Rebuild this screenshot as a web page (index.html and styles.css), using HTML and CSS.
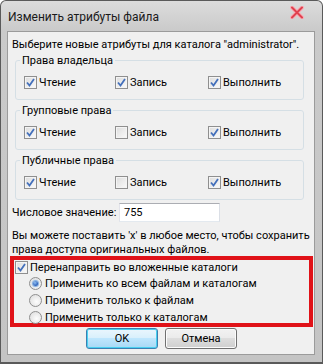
FILE: index.html
```html
<!DOCTYPE html>
<html lang="ru">
<head>
<meta charset="utf-8">
<title>Изменить атрибуты файла</title>
<link rel="stylesheet" href="styles.css">
</head>
<body>
<div class="window">
  <div class="titlebar">
    <span class="title">Изменить атрибуты файла</span>
    <svg class="close" width="14" height="13" viewBox="0 0 14 13">
      <path d="M2 1.5 L12 11.5 M12 1.5 L2 11.5" stroke="#f4b0b8" stroke-width="4" stroke-linecap="round"/>
      <path d="M2 1.5 L12 11.5 M12 1.5 L2 11.5" stroke="#e0404e" stroke-width="2" stroke-linecap="round"/>
    </svg>
  </div>
  <div class="client">
    <p class="intro">Выберите новые атрибуты для каталога "administrator".</p>

    <fieldset class="group">
      <legend>Права владельца</legend>
      <div class="row">
        <label class="chk"><span class="box on"><svg viewBox="0 0 9 9"><path d="M1 4.5 L3.5 7.5 L8 1"/></svg></span>Чтение</label>
        <label class="chk"><span class="box on"><svg viewBox="0 0 9 9"><path d="M1 4.5 L3.5 7.5 L8 1"/></svg></span>Запись</label>
        <label class="chk"><span class="box on"><svg viewBox="0 0 9 9"><path d="M1 4.5 L3.5 7.5 L8 1"/></svg></span>Выполнить</label>
      </div>
    </fieldset>

    <fieldset class="group">
      <legend>Групповые права</legend>
      <div class="row">
        <label class="chk"><span class="box on"><svg viewBox="0 0 9 9"><path d="M1 4.5 L3.5 7.5 L8 1"/></svg></span>Чтение</label>
        <label class="chk"><span class="box"></span>Запись</label>
        <label class="chk"><span class="box on"><svg viewBox="0 0 9 9"><path d="M1 4.5 L3.5 7.5 L8 1"/></svg></span>Выполнить</label>
      </div>
    </fieldset>

    <fieldset class="group">
      <legend>Публичные права</legend>
      <div class="row">
        <label class="chk"><span class="box on"><svg viewBox="0 0 9 9"><path d="M1 4.5 L3.5 7.5 L8 1"/></svg></span>Чтение</label>
        <label class="chk"><span class="box"></span>Запись</label>
        <label class="chk"><span class="box on"><svg viewBox="0 0 9 9"><path d="M1 4.5 L3.5 7.5 L8 1"/></svg></span>Выполнить</label>
      </div>
    </fieldset>

    <div class="numeric">
      <span>Числовое значение:</span>
      <div class="input">755</div>
    </div>

    <p class="help">Вы можете поставить 'x' в любое место, чтобы сохранить<br>права доступа оригинальных файлов.</p>

    <div class="redbox">
      <label class="chk sub"><span class="box on"><svg viewBox="0 0 9 9"><path d="M1 4.5 L3.5 7.5 L8 1"/></svg></span>Перенаправить во вложенные каталоги</label>
      <div class="radios">
        <label class="radio"><span class="dot on"></span>Применить ко всем файлам и каталогам</label>
        <label class="radio"><span class="dot"></span>Применить только к файлам</label>
        <label class="radio"><span class="dot"></span>Применить только к каталогам</label>
      </div>
    </div>

    <div class="buttons">
      <button class="btn ok">OK</button>
      <button class="btn">Отмена</button>
    </div>
  </div>
</div>
</body>
</html>
```
FILE: styles.css
```css
html, body {
  margin: 0;
  padding: 0;
}
body {
  font-family: Roboto, "Noto Sans", sans-serif;
  font-size: 11px;
  color: #000;
  white-space: nowrap;
}
.window {
  width: 323px;
  height: 364px;
  box-sizing: border-box;
  border: 1px solid #5a5a5a;
  border-bottom-width: 2px;
  border-radius: 6px 6px 0 0;
  background: linear-gradient(#dcdcdc, #cacaca 30px, #c4c4c4);
  display: flex;
  flex-direction: column;
  overflow: hidden;
}
.titlebar {
  height: 30px;
  flex: none;
  display: flex;
  align-items: center;
  justify-content: space-between;
  padding: 0 18px 0 7px;
}
.title {
  font-size: 12px;
  color: #1a1a1a;
  padding-top: 1px;
}
.close {
  margin-top: -8px;
}
.client {
  flex: 1;
  min-height: 0;
  margin: 0 7px 7px 6px;
  border: 1px solid #9b9b9b;
  background: #f0f0f0;
  display: flex;
  flex-direction: column;
  padding: 0;
}
.intro {
  margin: 0;
  padding: 5px 0 0 4px;
  line-height: 15px;
}
.group {
  margin: 1px 10px 0 7px;
  padding: 0 0 9px 4px;
  border: 1px solid #d5dfe5;
  border-radius: 3px;
  min-inline-size: 0;
}
.group + .group {
  margin-top: 3px;
}
.group legend {
  padding: 0 2px;
  line-height: 15px;
}
.row {
  display: grid;
  grid-template-columns: 91px 93px auto;
  padding: 7px 0 0 4px;
}
.chk, .radio {
  display: flex;
  align-items: center;
  gap: 2px;
  line-height: 15px;
}
.box {
  width: 13px;
  height: 13px;
  box-sizing: border-box;
  border: 1px solid #8f8f8f;
  background: linear-gradient(135deg, #dcdcdc, #fbfbfb);
  box-shadow: inset 0 0 0 1px #f4f4f4;
  display: flex;
  align-items: center;
  justify-content: center;
  flex: none;
}
.box svg {
  width: 9px;
  height: 9px;
}
.box svg path {
  fill: none;
  stroke: #4470bb;
  stroke-width: 1.8;
}
.numeric {
  display: flex;
  align-items: center;
  padding-left: 4px;
  margin-top: 3px;
}
.numeric span {
  flex: none;
  width: 107px;
}
.input {
  flex: none;
  width: 101px;
  height: 19px;
  box-sizing: border-box;
  border: 1px solid #abadb3;
  border-color: #abadb3 #dbdfe6 #e3e9ef #e2e3ea;
  background: #fff;
  padding-left: 4px;
  line-height: 17px;
}
.help {
  margin: 7px 0 0 0;
  padding-left: 4px;
  line-height: 14px;
}
.redbox {
  margin: -1px 1px 0 2px;
  height: 71px;
  flex: none;
  box-sizing: border-box;
  border: 4px solid #e01218;
  display: flex;
  flex-direction: column;
}
.chk.sub {
  padding-left: 1px;
  height: 15px;
}
.radios {
  display: flex;
  flex-direction: column;
  padding-left: 15px;
}
.radio {
  height: 17px;
  gap: 3px;
}
.dot {
  width: 13px;
  height: 13px;
  box-sizing: border-box;
  border-radius: 50%;
  border: 1px solid #8f8f8f;
  background: radial-gradient(circle at 60% 60%, #fdfdfd, #dadada);
  display: flex;
  align-items: center;
  justify-content: center;
  flex: none;
}
.dot.on::after {
  content: "";
  width: 5px;
  height: 5px;
  border-radius: 50%;
  background: radial-gradient(circle at 40% 35%, #8ec0f4, #1b4fae 80%);
  box-shadow: 0 0 1px 1px #7aaadf;
}
.buttons {
  display: flex;
  gap: 7px;
  margin: 1px 0 0 78px;
}
.btn {
  width: 72px;
  height: 21px;
  box-sizing: border-box;
  font-family: inherit;
  font-size: 11px;
  color: #000;
  border: 1px solid #707070;
  border-radius: 3px;
  background: linear-gradient(#f2f2f2, #ebebeb 45%, #dddddd 50%, #cfcfcf);
  box-shadow: inset 0 0 0 1px #fcfcfc;
  padding: 0;
}
.btn.ok {
  border-color: #3c7fb1;
  background: linear-gradient(#eaf6fd, #d9f0fc 45%, #bee6fd 50%, #a7d9f5);
  box-shadow: inset 0 0 0 1px #48d0f0;
}
```
